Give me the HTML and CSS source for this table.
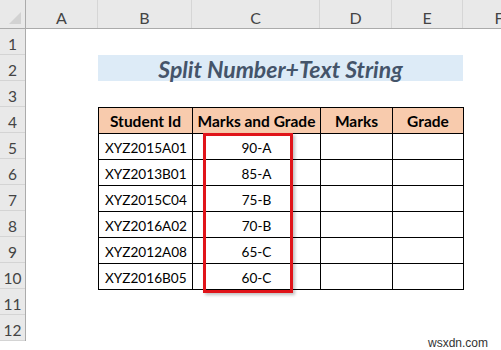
FILE: index.html
```html
<!DOCTYPE html>
<html>
<head>
<meta charset="utf-8">
<link rel="stylesheet" href="styles.css">
</head>
<body>
<div class="app">
  <div class="colhead">
    <div class="corner"><span class="tri"></span></div>
    <div class="ch w-a">A</div>
    <div class="ch w-b">B</div>
    <div class="ch w-c">C</div>
    <div class="ch w-d">D</div>
    <div class="ch w-e">E</div>
    <div class="ch w-f">F</div>
  </div>
  <div class="body">
    <div class="rowhead">
      <div class="rh">1</div><div class="rh">2</div><div class="rh">3</div><div class="rh">4</div>
      <div class="rh">5</div><div class="rh">6</div><div class="rh">7</div><div class="rh">8</div>
      <div class="rh">9</div><div class="rh">10</div><div class="rh">11</div><div class="rh">12</div>
    </div>
    <div class="sheet">
      <div class="blank"></div>
      <div class="title-row"><div class="title">Split Number+Text String</div></div>
      <div class="blank"></div>
      <div class="table">
        <div class="tr head"><div class="td w-b">Student Id</div><div class="td w-c">Marks and Grade</div><div class="td w-d">Marks</div><div class="td w-e">Grade</div></div>
        <div class="tr"><div class="td w-b left">XYZ2015A01</div><div class="td w-c">90-A</div><div class="td w-d"></div><div class="td w-e"></div></div>
        <div class="tr"><div class="td w-b left">XYZ2013B01</div><div class="td w-c">85-A</div><div class="td w-d"></div><div class="td w-e"></div></div>
        <div class="tr"><div class="td w-b left">XYZ2015C04</div><div class="td w-c">75-B</div><div class="td w-d"></div><div class="td w-e"></div></div>
        <div class="tr"><div class="td w-b left">XYZ2016A02</div><div class="td w-c">70-B</div><div class="td w-d"></div><div class="td w-e"></div></div>
        <div class="tr"><div class="td w-b left">XYZ2012A08</div><div class="td w-c">65-C</div><div class="td w-d"></div><div class="td w-e"></div></div>
        <div class="tr"><div class="td w-b left">XYZ2016B05</div><div class="td w-c">60-C</div><div class="td w-d"></div><div class="td w-e"></div></div>
      </div>
      <div class="highlight"></div>
    </div>
  </div>
  <div class="watermark">wsxdn.com</div>
</div>
</body>
</html>
```

FILE: styles.css
```css
* { box-sizing: border-box; }
html, body { margin: 0; padding: 0; background: #fff; }
body { font-family: Lato, "Open Sans", sans-serif; color: #000; }
.app { position: relative; width: 501px; height: 350px; overflow: hidden; }

.colhead { display: flex; height: 29px; background: #e9e9e9; border-bottom: 1px solid #ababab; }
.corner { position: relative; width: 26px; flex-shrink: 0; border-right: 1px solid #ababab; }
.tri { position: absolute; right: 4px; bottom: 4px; width: 0; height: 0;
  border-left: 12px solid transparent; border-bottom: 12px solid #d2d2d2; }
.ch { display: flex; align-items: center; justify-content: center; padding-top: 6px; flex-shrink: 0;
  color: #444; font-size: 16px; border-right: 1px solid #d6d6d6; }
.w-a { width: 72px; }
.w-b { width: 94px; }
.w-c { width: 128px; }
.w-d { width: 72px; }
.w-e { width: 71px; }
.w-f { width: 72px; border-right: none; }

.body { display: flex; }
.rowhead { width: 26px; flex-shrink: 0; background: #e9e9e9; border-right: 1px solid #ababab; }
.rh { height: 26px; border-bottom: 1px solid #d4d4d4; display: flex; align-items: center;
  justify-content: center; padding-top: 5px; color: #444; font-size: 15.5px; }

.sheet { position: relative; flex: 1; padding-left: 72px; }
.blank { height: 26px; }
.title-row { height: 26px; }
.title { width: 365px; height: 26px; background: #ddebf7; color: #44546a; font-weight: 700;
  font-style: italic; font-size: 23px; display: flex; align-items: center; justify-content: center;
  padding-top: 1px; }

.table { width: 366px; border-top: 1px solid #000; border-left: 1px solid #000; }
.tr { display: flex; height: 26px; }
.tr.head { background: #f8cbad; font-weight: 700; }
.tr.head .td { font-size: 15.5px; padding-top: 1px; }
.td { border-right: 1px solid #000; border-bottom: 1px solid #000; display: flex; align-items: center;
  justify-content: center; font-size: 13.6px; padding-top: 3px; }
.tr .w-b { width: 94px; }
.tr .w-c { width: 128px; }
.tr .w-d { width: 72px; }
.tr .w-e { width: 71px; }
.td.left { justify-content: flex-start; padding-left: 6px; }

.highlight { position: absolute; left: 177px; top: 104px; width: 90px; height: 160px;
  border: 3px solid #e0141a; box-shadow: 2px 2px 3px rgba(0,0,0,0.25); }

.watermark { position: absolute; left: 428px; top: 336px; font-family: "Liberation Sans", Arial, sans-serif;
  font-size: 12px; color: #333; }
```
